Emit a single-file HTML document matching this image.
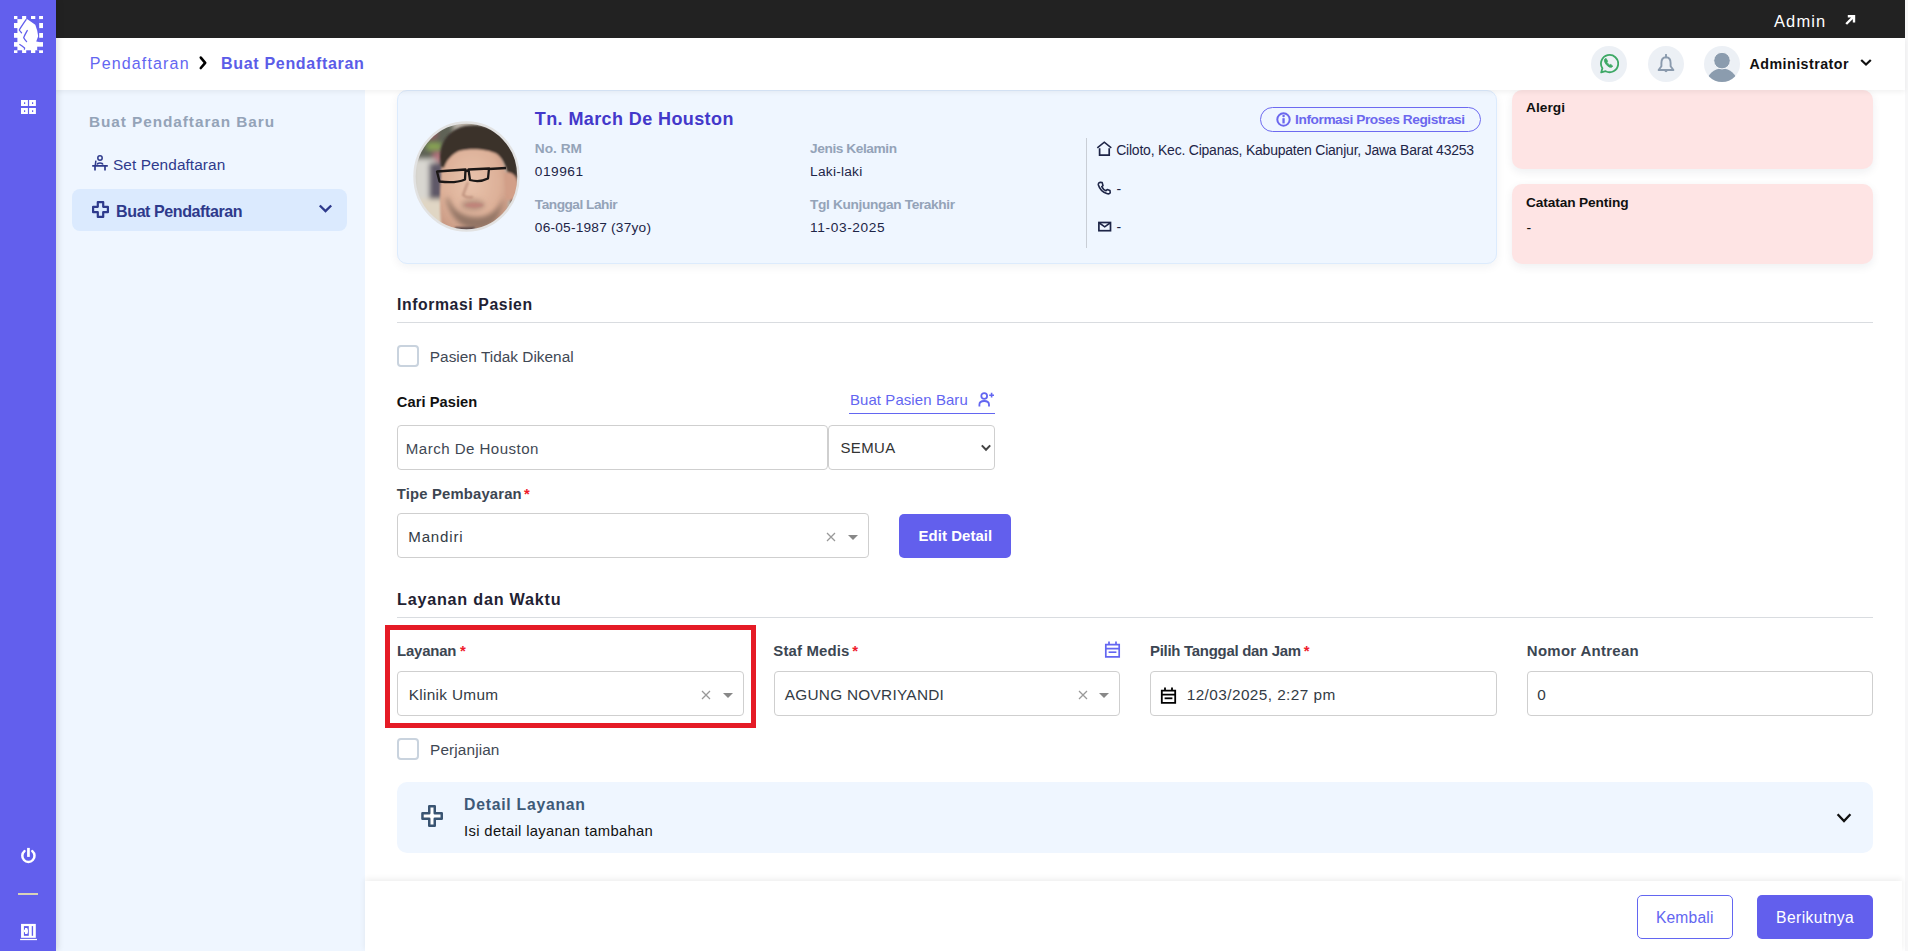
<!DOCTYPE html>
<html><head><meta charset="utf-8"><title>Buat Pendaftaran</title>
<style>
*{margin:0;padding:0;box-sizing:border-box}
html,body{width:1908px;height:951px;overflow:hidden;background:#fff}
body{font-family:"Liberation Sans", sans-serif}
#root{position:relative;width:1908px;height:951px;overflow:hidden;background:#fff}
.a{position:absolute;display:block}
.t{position:absolute;line-height:1;white-space:nowrap;font-family:"Liberation Sans", sans-serif}
.inp{position:absolute;background:#fff;border:1px solid #CFCFCF;border-radius:4px}
.chk{position:absolute;width:22px;height:22px;border:2px solid #C9D3DE;border-radius:4px;background:#fff}
.btnp{position:absolute;background:#625FED;border-radius:5px}
.circ{position:absolute;width:36px;height:36px;border-radius:50%;background:#ECF0F5}

</style></head><body>
<div id="root">
<div class="a" style="left:1905px;top:0;width:3px;height:951px;background:#F7F7F8"></div>
<!-- submenu panel -->
<div class="a" style="left:56px;top:90px;width:309px;height:861px;background:#EFF6FF"></div>
<!-- patient card -->
<div class="a" style="left:397px;top:90px;width:1100px;height:174px;background:#EFF6FF;border:1px solid #DCEBFD;border-radius:10px;box-shadow:0 3px 10px rgba(20,30,60,.06)"></div>
<div class="a" style="left:1512px;top:90px;width:361px;height:78.5px;background:#FEE4E4;border-radius:10px;box-shadow:0 3px 10px rgba(20,30,60,.07)"></div>
<div class="a" style="left:1512px;top:184px;width:361px;height:80px;background:#FEE4E4;border-radius:10px;box-shadow:0 3px 10px rgba(20,30,60,.07)"></div>
<!-- header -->
<div class="a" style="left:56px;top:38px;width:1849px;height:52px;background:#fff;box-shadow:0 2px 5px rgba(0,0,0,.06)"></div>
<div class="a" style="left:56px;top:0;width:1849px;height:38px;background:#222222"></div>
<!-- sidebar -->
<div class="a" style="left:0;top:0;width:56px;height:951px;background:#625FED;box-shadow:2px 0 6px rgba(0,0,0,.12)"></div>
<!-- divider in card -->
<div class="a" style="left:1086px;top:138px;width:1px;height:110px;background:#C9CED6"></div>
<!-- info button -->
<div class="a" style="left:1260px;top:107px;width:221px;height:25px;border:1px solid #6D6AF0;border-radius:13px"></div>
<!-- section lines -->
<div class="a" style="left:397px;top:322px;width:1476px;height:1px;background:#D9DCE0"></div>
<div class="a" style="left:397px;top:617px;width:1476px;height:1px;background:#D9DCE0"></div>
<!-- checkboxes -->
<div class="chk" style="left:397px;top:345px"></div>
<div class="chk" style="left:397px;top:738px"></div>
<!-- link underline -->
<div class="a" style="left:849px;top:412.5px;width:146px;height:1.6px;background:#6366F1"></div>
<!-- inputs -->
<div class="inp" style="left:397px;top:425px;width:431px;height:45px"></div>
<div class="inp" style="left:828px;top:425px;width:167px;height:45px"></div>
<div class="inp" style="left:397px;top:513px;width:472px;height:45px"></div>
<div class="btnp" style="left:899px;top:514px;width:112px;height:44px"></div>
<!-- red box -->
<div class="a" style="left:385px;top:625px;width:371px;height:103px;border:5px solid #E51B26"></div>
<div class="inp" style="left:397px;top:671px;width:347px;height:45px"></div>
<div class="inp" style="left:774px;top:671px;width:346px;height:45px"></div>
<div class="inp" style="left:1150px;top:671px;width:347px;height:45px"></div>
<div class="inp" style="left:1527px;top:671px;width:346px;height:45px"></div>
<!-- detail card -->
<div class="a" style="left:397px;top:782px;width:1476px;height:71px;background:#EFF6FF;border-radius:10px"></div>
<!-- footer -->
<div class="a" style="left:365px;top:881px;width:1537px;height:70px;background:#fff;box-shadow:0 -2px 6px rgba(0,0,0,.07)"></div>
<div class="a" style="left:1637px;top:895px;width:96px;height:44px;border:1.5px solid #6366F1;border-radius:5px;background:#fff"></div>
<div class="btnp" style="left:1757px;top:895px;width:116px;height:44px"></div>
<!-- active menu item -->
<div class="a" style="left:72px;top:189px;width:275px;height:42px;background:#DBEAFE;border-radius:8px"></div>
<!-- header circles -->
<div class="circ" style="left:1591px;top:46px"></div>
<div class="circ" style="left:1648px;top:46px"></div>
<div class="circ" style="left:1704px;top:46px"></div>
<!-- sidebar logo -->
<svg class="a" style="left:13.9px;top:15.9px" width="29.2" height="37" viewBox="0 0 29.2 37">
<rect x="0" y="0" width="29.2" height="37" fill="#fff"/>
<g fill="#625FED"><rect x="3.4" y="0" width="4.70" height="3.10"/><rect x="3.4" y="34.3" width="4.70" height="2.70"/><rect x="12.2" y="0" width="4.80" height="3.10"/><rect x="12.2" y="34.3" width="4.80" height="2.70"/><rect x="21.3" y="0" width="3.80" height="3.10"/><rect x="21.3" y="34.3" width="3.80" height="2.70"/><rect x="0" y="3.1" width="3.40" height="3.90"/><rect x="25.1" y="3.1" width="4.10" height="3.90"/><rect x="0" y="12.1" width="3.40" height="4.90"/><rect x="25.1" y="12.1" width="4.10" height="4.90"/><rect x="0" y="21.8" width="3.40" height="4.30"/><rect x="25.1" y="21.8" width="4.10" height="4.30"/><rect x="0" y="30.7" width="3.40" height="3.60"/><rect x="25.1" y="30.7" width="4.10" height="3.60"/>
<polygon points="13.05,2.9 25.2,2.9 25.2,26.1 22.2,25.6 24.2,20.3 23.2,14.5 21.3,8.7"/>
<rect x="23.2" y="30.7" width="2" height="3.6"/>
</g>
<g fill="none" stroke="#625FED" stroke-width="1.3" stroke-linecap="round" stroke-linejoin="round">
<path d="M12.1 3.6 C9.5 7.5 7 11 5.3 14 C6 15.2 6.8 16 7.5 16.7"/>
<path d="M13.3 14.5 C11.6 17.5 10.4 19.6 9.7 21.8 C10.6 23.5 11.6 24.6 12.6 25.6"/>
<path d="M5.8 28.5 C7.6 29.6 9.2 30.8 10.6 31.9 L10.4 33.2"/>
</g>
</svg>
<!-- grid icon -->
<svg class="a" style="left:21px;top:99.9px" width="15" height="14.2" viewBox="0 0 15 14.2">
<path fill="#fff" fill-rule="evenodd" d="M0 0h6.9v6.1H0z M3 2.2h1.2v1.8H3z M8.1 0h6.8v6.1H8.1z M11 2.2h1.2v1.8H11z M0 8h6.9v6.1H0z M3 10.2h1.2v1.8H3z M8.1 8h6.8v6.1H8.1z M11 10.2h1.2v1.8H11z"/>
</svg>
<!-- power -->
<svg class="a" style="left:20px;top:846px" width="17" height="19" viewBox="0 0 17 19">
<path d="M4.48 5.13 A6.1 6.1 0 1 0 12.32 5.13" fill="none" stroke="#fff" stroke-width="2.5" stroke-linecap="round"/>
<rect x="7.1" y="1.9" width="2.7" height="9" fill="#fff"/>
</svg>
<div class="a" style="left:18px;top:893px;width:20px;height:2px;background:#D8D2B8"></div>
<!-- exit -->
<svg class="a" style="left:20px;top:923px" width="17.5" height="18" viewBox="0 0 17.5 18">
<rect x="1.05" y="0.9" width="14.75" height="13.9" fill="#fff"/>
<rect x="3.9" y="3.1" width="4.9" height="9.7" fill="#625FED"/>
<rect x="3.9" y="6.7" width="1.4" height="2.5" fill="#fff"/>
<path d="M5 4.9 H7 C8.2 5.8 8.4 10 7 11.1 H5 Z" fill="#fff"/>
<rect x="11.75" y="3.1" width="1.35" height="9.7" fill="#625FED"/>
<rect x="0.1" y="15.9" width="16.9" height="1.25" fill="#fff"/>
</svg>
<!-- top bar arrow -->
<svg class="a" style="left:1844px;top:14px" width="12" height="12" viewBox="0 0 12 12">
<path d="M2.2 10 L9.6 2.6 M3.8 2.2 H10 V8.4" fill="none" stroke="#fff" stroke-width="2.4"/>
</svg>
<!-- breadcrumb chevron -->
<svg class="a" style="left:198px;top:55px" width="10" height="16" viewBox="0 0 10 16">
<path d="M2.8 2.6 L7.2 7.9 L2.8 13" fill="none" stroke="#000" stroke-width="2.6" stroke-linecap="round" stroke-linejoin="round"/>
</svg>
<!-- whatsapp -->
<svg class="a" style="left:1598px;top:53px" width="21" height="21" viewBox="0 0 21 21">
<path d="M3.2 19.4 L4.4 15.3 A8.6 8.6 0 1 1 7.6 18.2 Z" fill="none" stroke="#3DA865" stroke-width="1.8" stroke-linejoin="round"/>
<path d="M7 5.8 C6 6.8 6.2 8.8 8 11.2 C9.8 13.6 12.2 14.8 13.6 14.2 L14.8 13.2 L12.8 11.4 L11.6 12 C10.6 11.4 9.6 10.4 9 9.4 L9.6 8.2 L8.2 5.6 Z" fill="#3DA865" stroke="#3DA865" stroke-width="0.8" stroke-linejoin="round"/>
</svg>
<!-- bell -->
<svg class="a" style="left:1657px;top:53.5px" width="18" height="21" viewBox="0 0 18 21">
<path d="M9 3.2 C5.6 3.2 4.4 6 4.4 9 V12.2 L1.6 16 H16.4 L13.6 12.2 V9 C13.6 6 12.4 3.2 9 3.2 Z" fill="none" stroke="#8A9AAD" stroke-width="1.9" stroke-linejoin="round"/>
<line x1="9" y1="0.8" x2="9" y2="3.4" stroke="#8A9AAD" stroke-width="1.9" stroke-linecap="round"/>
<path d="M7.4 16.2 C7.4 18.8 10.6 18.8 10.6 16.2 Z" fill="#8A9AAD"/>
</svg>
<!-- admin avatar -->
<svg class="a" style="left:1704px;top:46px" width="36" height="36" viewBox="0 0 36 36">
<defs><clipPath id="cav"><circle cx="18" cy="18" r="18"/></clipPath></defs>
<g clip-path="url(#cav)">
<ellipse cx="18" cy="36" rx="14.8" ry="13.5" fill="#8B9CAE"/>
<circle cx="18" cy="14.6" r="8.3" fill="#8B9CAE" stroke="#F4F6F9" stroke-width="1"/>
</g>
</svg>
<!-- administrator chevron -->
<svg class="a" style="left:1860px;top:58px" width="12" height="9" viewBox="0 0 12 9">
<path d="M1.2 2 L6 6.6 L10.8 2" fill="none" stroke="#111" stroke-width="2.2"/>
</svg>
<!-- set pendaftaran icon -->
<svg class="a" style="left:92px;top:155px" width="16" height="16" viewBox="0 0 16 16">
<circle cx="8" cy="3" r="2.2" fill="none" stroke="#2E3A8C" stroke-width="1.5"/>
<path d="M5.2 9.6 C5.6 7.4 10.4 7.4 10.8 9.6" fill="none" stroke="#2E3A8C" stroke-width="1.6"/>
<path d="M3.9 5.6 L3.2 10.6" fill="none" stroke="#2E3A8C" stroke-width="1.5"/>
<path d="M0.2 10.9 H15.8 M3 10.9 V15.6 M13 10.9 V15.6" fill="none" stroke="#2E3A8C" stroke-width="1.7"/>
</svg>
<!-- plus icon submenu -->
<svg class="a" style="left:91.5px;top:200.8px" width="17" height="17" viewBox="0 0 17 17">
<path d="M5.8 1.1 H11.2 V5.8 H15.9 V11.2 H11.2 V15.9 H5.8 V11.2 H1.1 V5.8 H5.8 Z" fill="none" stroke="#2E3A8C" stroke-width="2.2" stroke-linejoin="round"/>
</svg>
<!-- submenu chevron -->
<svg class="a" style="left:318px;top:203px" width="15" height="11" viewBox="0 0 15 11">
<path d="M1.8 2.5 L7.5 8 L13.2 2.5" fill="none" stroke="#2E3A8C" stroke-width="2.4"/>
</svg>
<!-- info circle -->
<svg class="a" style="left:1275.5px;top:111.5px" width="15" height="15" viewBox="0 0 15 15">
<circle cx="7.5" cy="7.5" r="6.2" fill="none" stroke="#6B67EE" stroke-width="2"/>
<rect x="6.4" y="6.2" width="2.3" height="5.2" fill="#6B67EE"/>
<circle cx="7.55" cy="4.1" r="1.25" fill="#6B67EE"/>
</svg>
<!-- house -->
<svg class="a" style="left:1096px;top:141px" width="17" height="16" viewBox="0 0 17 16">
<path d="M1.3 6.8 L8.3 1.2 L15.3 6.8" fill="none" stroke="#1E2547" stroke-width="1.6" stroke-linejoin="miter"/>
<path d="M3.6 7.2 V14.2 H13.2 V7.2" fill="none" stroke="#1E2547" stroke-width="1.7"/>
</svg>
<!-- phone -->
<svg class="a" style="left:1097px;top:181px" width="15" height="14" viewBox="0 0 15 14">
<path d="M3.2 1.2 L5.2 1.6 L6 4.6 L4.8 5.6 C5.6 7.6 7 9 9 9.8 L10.2 8.6 L13 9.6 L13.2 11.8 C12.6 12.8 11 13 9.8 12.6 C5.8 11.2 2.6 8 1.4 4 C1.1 2.8 1.9 1.6 3.2 1.2 Z" fill="none" stroke="#1E2547" stroke-width="1.6" stroke-linejoin="round"/>
</svg>
<!-- mail -->
<svg class="a" style="left:1097px;top:220.5px" width="15" height="11" viewBox="0 0 15 11">
<rect x="1.9" y="1.5" width="11.6" height="8.2" fill="none" stroke="#1E2547" stroke-width="1.7"/>
<path d="M2.4 2 L7.7 5.8 L13 2" fill="none" stroke="#1E2547" stroke-width="1.6"/>
</svg>
<!-- person plus -->
<svg class="a" style="left:978px;top:392px" width="17" height="15" viewBox="0 0 17 15">
<circle cx="6.2" cy="4" r="2.9" fill="none" stroke="#6366F1" stroke-width="1.8"/>
<path d="M1.4 14.5 V12.6 C1.4 10.4 3.4 9 6.2 9 C9 9 11 10.4 11 12.6 V14.5" fill="none" stroke="#6366F1" stroke-width="1.8"/>
<path d="M13.6 0.8 V5.6 M11.2 3.2 H16" stroke="#6366F1" stroke-width="1.6"/>
</svg>
<!-- select chevron SEMUA -->
<svg class="a" style="left:980px;top:442.5px" width="12" height="10" viewBox="0 0 12 10">
<path d="M1.8 2.4 L6 6.8 L10.2 2.4" fill="none" stroke="#444" stroke-width="2"/>
</svg>
<!-- select2 clear + arrows -->
<svg class="a" style="left:826px;top:531.5px" width="10" height="10" viewBox="0 0 10 10"><path d="M1 1 L9 9 M9 1 L1 9" stroke="#999999" stroke-width="1.25"/></svg>
<svg class="a" style="left:848px;top:535px" width="10" height="5" viewBox="0 0 10 5"><path d="M0 0 H10 L5 5 Z" fill="#888"/></svg>
<svg class="a" style="left:701px;top:689.5px" width="10" height="10" viewBox="0 0 10 10"><path d="M1 1 L9 9 M9 1 L1 9" stroke="#999999" stroke-width="1.25"/></svg>
<svg class="a" style="left:723px;top:693px" width="10" height="5" viewBox="0 0 10 5"><path d="M0 0 H10 L5 5 Z" fill="#888"/></svg>
<svg class="a" style="left:1077.5px;top:689.5px" width="10" height="10" viewBox="0 0 10 10"><path d="M1 1 L9 9 M9 1 L1 9" stroke="#999999" stroke-width="1.25"/></svg>
<svg class="a" style="left:1099px;top:693px" width="10" height="5" viewBox="0 0 10 5"><path d="M0 0 H10 L5 5 Z" fill="#888"/></svg>
<!-- calendar purple -->
<svg class="a" style="left:1103.5px;top:640.5px" width="17" height="17" viewBox="0 0 17 17">
<path d="M1.8 3.6 H15.2 V15.8 H1.8 Z M1.8 7.6 H15.2" fill="none" stroke="#6366F1" stroke-width="1.7"/>
<path d="M5 0.6 V4 M12 0.6 V4" stroke="#6366F1" stroke-width="1.7"/>
<rect x="4.6" y="10.4" width="7.8" height="1.6" fill="#6366F1"/>
</svg>
<!-- calendar black -->
<svg class="a" style="left:1159.5px;top:686.5px" width="17" height="17" viewBox="0 0 17 17">
<path d="M1.8 3.6 H15.2 V15.8 H1.8 Z M1.8 7.6 H15.2" fill="none" stroke="#000" stroke-width="1.8"/>
<path d="M5 0.6 V4 M12 0.6 V4" stroke="#000" stroke-width="1.8"/>
<rect x="4.6" y="10.4" width="7.8" height="1.8" fill="#000"/>
</svg>
<!-- detail plus -->
<svg class="a" style="left:420px;top:804px" width="24" height="24" viewBox="0 0 24 24">
<path d="M9.25 2.25 H14.75 V9.25 H21.75 V14.75 H14.75 V21.75 H9.25 V14.75 H2.45 V9.25 H9.25 Z" fill="#fff" stroke="#3A5573" stroke-width="2.5" stroke-linejoin="round"/>
</svg>
<!-- detail chevron -->
<svg class="a" style="left:1836px;top:812px" width="16" height="12" viewBox="0 0 16 12">
<path d="M1.6 2.2 L8 9 L14.4 2.2" fill="none" stroke="#111" stroke-width="2.3"/>
</svg>
<svg class="a" style="left:413px;top:120.5px" width="107" height="111" viewBox="0 0 107 111">
<defs>
<clipPath id="avc"><ellipse cx="53.5" cy="55.5" rx="52" ry="54"/></clipPath>
<filter id="bl1" x="-20%" y="-20%" width="140%" height="140%"><feGaussianBlur stdDeviation="2.4"/></filter>
<filter id="bl2" x="-10%" y="-10%" width="120%" height="120%"><feGaussianBlur stdDeviation="0.8"/></filter>
<filter id="bl3" x="-30%" y="-30%" width="160%" height="160%"><feGaussianBlur stdDeviation="2.5"/></filter>
<radialGradient id="skin" cx="0.45" cy="0.45" r="0.6"><stop offset="0" stop-color="#E8C3AC"/><stop offset="0.7" stop-color="#DDB098"/><stop offset="1" stop-color="#C99A84"/></radialGradient>
</defs>
<g clip-path="url(#avc)">
<rect x="0" y="0" width="107" height="111" fill="#B9B2A8"/>
<g filter="url(#bl1)">
<rect x="0" y="0" width="40" height="40" fill="#5E6256"/>
<rect x="12" y="8" width="12" height="10" fill="#8E5B5E"/>
<rect x="14" y="22" width="14" height="7" fill="#8AA552"/>
<rect x="20" y="31" width="12" height="9" fill="#B0707A"/>
<rect x="0" y="38" width="22" height="42" fill="#D8D6D0"/>
<rect x="16" y="42" width="16" height="36" fill="#5F5868"/>
<rect x="0" y="78" width="50" height="40" fill="#E0D6C4"/>
</g>
<g filter="url(#bl2)">
<path d="M29 111 C27 95 26 75 28 56 C28 34 36 20 54 20 C74 20 88 30 92 48 L95 62 C97 82 93 100 84 111 Z" fill="url(#skin)"/>
<path d="M28 46 C24 28 32 9 52 5 C74 1 98 12 104 40 L106 88 L98 84 L96 60 C94 46 90 38 84 33 C74 28 58 27 46 30 C38 34 33 40 31 47 Z" fill="#3B302B"/>
<path d="M91 52 C98 49 105 55 105 65 C105 76 101 81 93 79 Z" fill="#D29F88"/>
</g>
<g filter="url(#bl3)">
<path d="M33 78 C38 100 52 109 66 109 C80 108 88 96 91 76 C86 88 78 96 64 96 C50 96 40 90 35 76 Z" fill="#8F7262" opacity="0.95"/>
<ellipse cx="60" cy="84" rx="12" ry="6" fill="#A98878" opacity="0.7"/>
</g>
<g filter="url(#bl2)">
<path d="M51 84 C57 81 65 81 71 84 C65 87.5 57 87.5 51 84 Z" fill="#C0847A"/>
<path d="M55 61 L50 74 C52 76 56 77 60 76" fill="none" stroke="#BC8E7A" stroke-width="2"/>
<rect x="42" y="106" width="20" height="6" fill="#5A4A48"/>
</g>
<g fill="none" stroke="#1B1716" stroke-width="2.3" stroke-linejoin="round">
<path d="M24 50.5 L52.5 48.5 L52 58.5 C45 61.5 34 61.5 26.5 60.5 Z"/>
<path d="M55.5 48.5 L76 47.5 L75 57.5 C69 60.5 62 60.5 57 59 Z"/>
<path d="M53 50 L55.5 49.5 M76 48 L93 47"/>
</g>
</g>
<ellipse cx="53.5" cy="55.5" rx="52" ry="54" fill="none" stroke="#E2E2E2" stroke-width="2.4"/>
</svg>

<span id="t0" class="t" style="left:1774.0px;top:12.9px;font-size:16.48px;font-weight:400;color:#ffffff;letter-spacing:1.122px;">Admin</span>
<span id="t1" class="t" style="left:89.8px;top:55.4px;font-size:16.06px;font-weight:400;color:#6366F1;letter-spacing:1.133px;">Pendaftaran</span>
<span id="t2" class="t" style="left:221.0px;top:55.4px;font-size:16.06px;font-weight:600;color:#5B5CE8;letter-spacing:0.665px;">Buat Pendaftaran</span>
<span id="t3" class="t" style="left:1749.5px;top:56.9px;font-size:14.25px;font-weight:600;color:#111111;letter-spacing:0.466px;">Administrator</span>
<span id="t4" class="t" style="left:88.9px;top:113.7px;font-size:15.36px;font-weight:600;color:#94A3B8;letter-spacing:0.941px;">Buat Pendaftaran Baru</span>
<span id="t5" class="t" style="left:113.0px;top:156.9px;font-size:15.36px;font-weight:400;color:#2E3A8C;letter-spacing:0.086px;">Set Pendaftaran</span>
<span id="t6" class="t" style="left:116.1px;top:202.7px;font-size:16.06px;font-weight:700;color:#2E3A8C;letter-spacing:-0.429px;">Buat Pendaftaran</span>
<span id="t7" class="t" style="left:534.8px;top:109.7px;font-size:18.02px;font-weight:600;color:#4338CA;letter-spacing:0.391px;">Tn. March De Houston</span>
<span id="t8" class="t" style="left:534.8px;top:142.3px;font-size:13.69px;font-weight:600;color:#94A3B8;letter-spacing:0.010px;">No. RM</span>
<span id="t9" class="t" style="left:534.8px;top:165.2px;font-size:13.69px;font-weight:400;color:#1E2547;letter-spacing:0.519px;">019961</span>
<span id="t10" class="t" style="left:810.1px;top:142.3px;font-size:13.69px;font-weight:600;color:#94A3B8;letter-spacing:-0.428px;">Jenis Kelamin</span>
<span id="t11" class="t" style="left:810.1px;top:165.2px;font-size:13.69px;font-weight:400;color:#1E2547;letter-spacing:0.242px;">Laki-laki</span>
<span id="t12" class="t" style="left:534.8px;top:197.7px;font-size:13.69px;font-weight:600;color:#94A3B8;letter-spacing:-0.495px;">Tanggal Lahir</span>
<span id="t13" class="t" style="left:534.8px;top:220.5px;font-size:13.69px;font-weight:400;color:#1E2547;letter-spacing:0.222px;">06-05-1987 (37yo)</span>
<span id="t14" class="t" style="left:810.1px;top:197.7px;font-size:13.69px;font-weight:600;color:#94A3B8;letter-spacing:-0.360px;">Tgl Kunjungan Terakhir</span>
<span id="t15" class="t" style="left:810.1px;top:220.5px;font-size:13.69px;font-weight:400;color:#1E2547;letter-spacing:0.610px;">11-03-2025</span>
<span id="t16" class="t" style="left:1295.1px;top:112.9px;font-size:13.69px;font-weight:600;color:#6B67EE;letter-spacing:-0.425px;">Informasi Proses Registrasi</span>
<span id="t17" class="t" style="left:1116.2px;top:144.2px;font-size:13.97px;font-weight:400;color:#1E2547;letter-spacing:-0.209px;">Ciloto, Kec. Cipanas, Kabupaten Cianjur, Jawa Barat 43253</span>
<span id="t18" class="t" style="left:1116.5px;top:182.7px;font-size:13.97px;font-weight:400;color:#1E2547;">-</span>
<span id="t19" class="t" style="left:1116.5px;top:220.7px;font-size:13.97px;font-weight:400;color:#1E2547;">-</span>
<span id="t20" class="t" style="left:1526.1px;top:101.4px;font-size:13.69px;font-weight:700;color:#111111;letter-spacing:0.017px;">Alergi</span>
<span id="t21" class="t" style="left:1526.1px;top:196.4px;font-size:13.69px;font-weight:700;color:#111111;letter-spacing:-0.126px;">Catatan Penting</span>
<span id="t22" class="t" style="left:1526.5px;top:222.2px;font-size:13.97px;font-weight:400;color:#111111;">-</span>
<span id="t23" class="t" style="left:397.0px;top:296.8px;font-size:15.78px;font-weight:600;color:#1F2233;letter-spacing:0.596px;">Informasi Pasien</span>
<span id="t24" class="t" style="left:429.8px;top:348.8px;font-size:15.36px;font-weight:400;color:#3F4854;letter-spacing:0.023px;">Pasien Tidak Dikenal</span>
<span id="t25" class="t" style="left:396.8px;top:395.1px;font-size:14.66px;font-weight:700;color:#111111;letter-spacing:0.060px;">Cari Pasien</span>
<span id="t26" class="t" style="left:849.9px;top:393.1px;font-size:14.94px;font-weight:400;color:#6366F1;letter-spacing:0.108px;">Buat Pasien Baru</span>
<span id="t27" class="t" style="left:405.8px;top:441.3px;font-size:15.08px;font-weight:400;color:#3F4854;letter-spacing:0.461px;">March De Houston</span>
<span id="t28" class="t" style="left:840.5px;top:441.3px;font-size:14.94px;font-weight:400;color:#333333;letter-spacing:0.395px;">SEMUA</span>
<span id="t29" class="t" style="left:396.8px;top:486.5px;font-size:14.80px;font-weight:700;color:#3C4652;letter-spacing:0.181px;">Tipe Pembayaran</span>
<span id="t30" class="t" style="left:524.0px;top:486.5px;font-size:14.80px;font-weight:700;color:#EF1C2C;">*</span>
<span id="t31" class="t" style="left:408.3px;top:529.1px;font-size:15.08px;font-weight:400;color:#333B45;letter-spacing:0.807px;">Mandiri</span>
<span id="t32" class="t" style="left:918.6px;top:529.3px;font-size:14.94px;font-weight:600;color:#ffffff;letter-spacing:0.050px;">Edit Detail</span>
<span id="t33" class="t" style="left:397.0px;top:590.7px;font-size:16.20px;font-weight:600;color:#1F2233;letter-spacing:0.763px;">Layanan dan Waktu</span>
<span id="t34" class="t" style="left:397.0px;top:644.3px;font-size:14.94px;font-weight:700;color:#3C4652;letter-spacing:-0.187px;">Layanan</span>
<span id="t35" class="t" style="left:460.0px;top:644.3px;font-size:14.94px;font-weight:700;color:#EF1C2C;">*</span>
<span id="t36" class="t" style="left:408.7px;top:687.1px;font-size:15.36px;font-weight:400;color:#333B45;letter-spacing:0.327px;">Klinik Umum</span>
<span id="t37" class="t" style="left:773.3px;top:644.3px;font-size:14.94px;font-weight:700;color:#3C4652;letter-spacing:0.150px;">Staf Medis</span>
<span id="t38" class="t" style="left:852.2px;top:644.3px;font-size:14.94px;font-weight:700;color:#EF1C2C;">*</span>
<span id="t39" class="t" style="left:784.7px;top:687.1px;font-size:15.36px;font-weight:400;color:#333B45;letter-spacing:0.278px;">AGUNG NOVRIYANDI</span>
<span id="t40" class="t" style="left:1150.0px;top:644.3px;font-size:14.94px;font-weight:700;color:#3C4652;letter-spacing:-0.272px;">Pilih Tanggal dan Jam</span>
<span id="t41" class="t" style="left:1303.8px;top:644.3px;font-size:14.94px;font-weight:700;color:#EF1C2C;">*</span>
<span id="t42" class="t" style="left:1186.7px;top:687.1px;font-size:15.36px;font-weight:400;color:#333B45;letter-spacing:0.421px;">12/03/2025, 2:27 pm</span>
<span id="t43" class="t" style="left:1526.8px;top:644.3px;font-size:14.94px;font-weight:700;color:#3C4652;letter-spacing:0.310px;">Nomor Antrean</span>
<span id="t44" class="t" style="left:1537.3px;top:687.1px;font-size:15.36px;font-weight:400;color:#333B45;">0</span>
<span id="t45" class="t" style="left:430.1px;top:742.2px;font-size:15.36px;font-weight:400;color:#3F4854;letter-spacing:0.109px;">Perjanjian</span>
<span id="t46" class="t" style="left:464.1px;top:796.5px;font-size:15.78px;font-weight:600;color:#3E5A78;letter-spacing:0.737px;">Detail Layanan</span>
<span id="t47" class="t" style="left:464.1px;top:823.5px;font-size:14.80px;font-weight:400;color:#111111;letter-spacing:0.331px;">Isi detail layanan tambahan</span>
<span id="t48" class="t" style="left:1655.9px;top:910.1px;font-size:15.64px;font-weight:400;color:#6366F1;letter-spacing:0.178px;">Kembali</span>
<span id="t49" class="t" style="left:1776.1px;top:910.1px;font-size:15.64px;font-weight:400;color:#ffffff;letter-spacing:0.427px;">Berikutnya</span>
</div>
</body></html>
